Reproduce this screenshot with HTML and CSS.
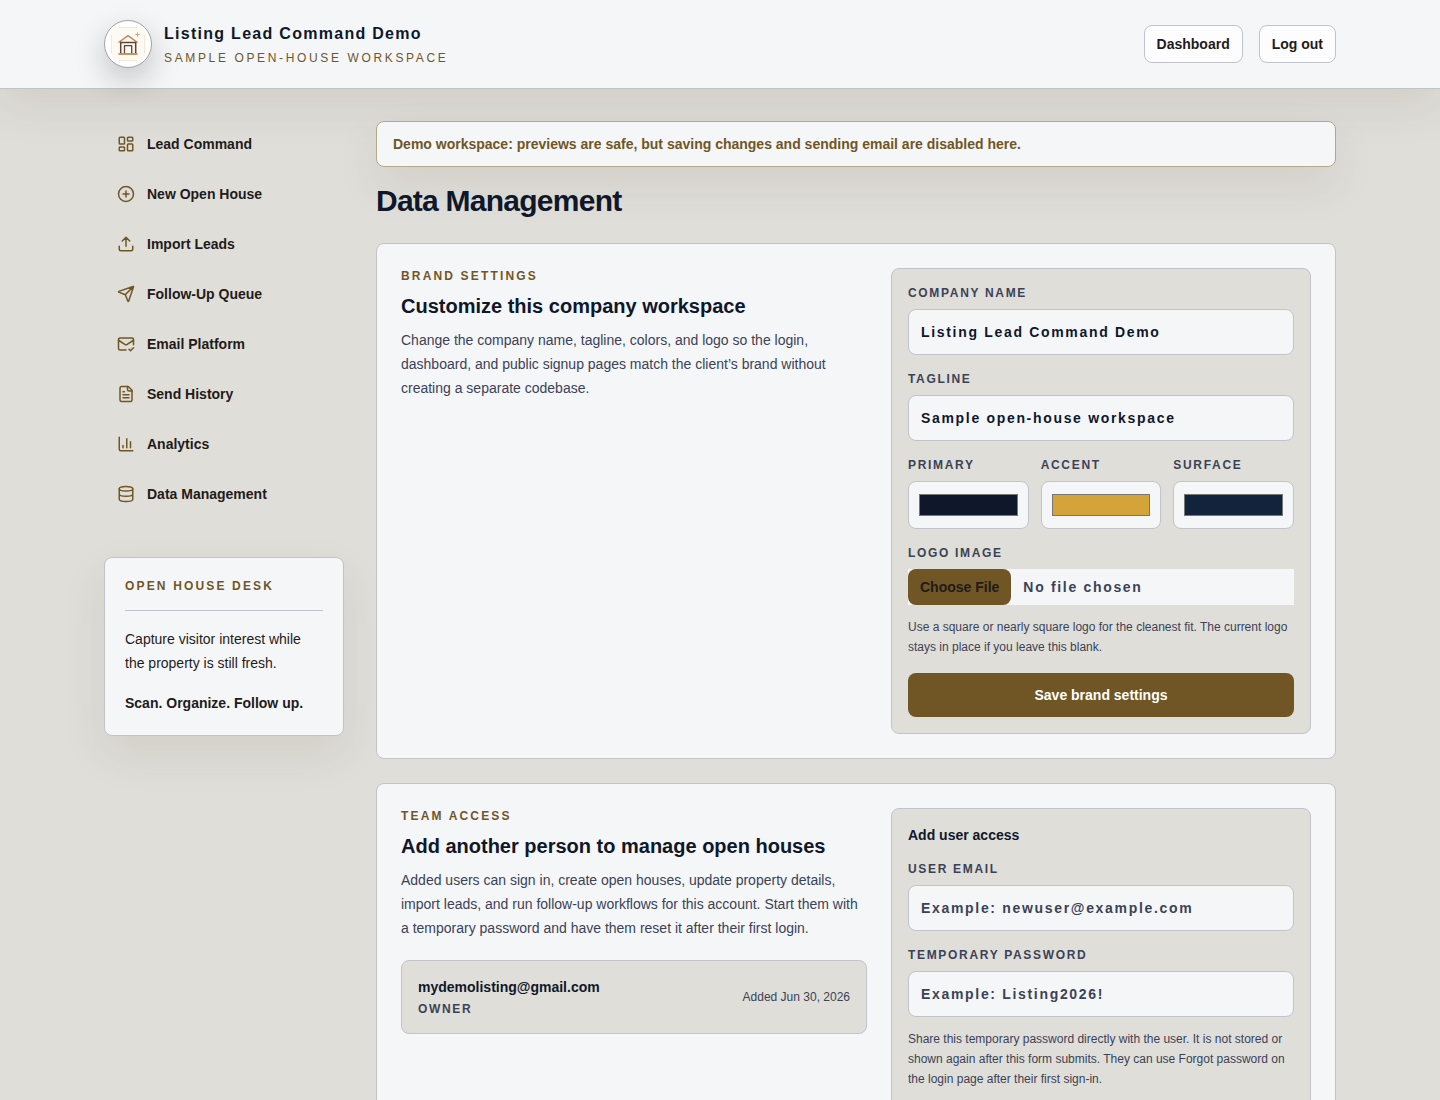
FILE: index.html
```html
<!DOCTYPE html>
<html lang="en">
<head>
<meta charset="utf-8">
<title>Data Management</title>
<link rel="stylesheet" href="styles.css">
</head>
<body>
<header class="topbar">
  <div class="topbar-inner">
    <div class="brand">
      <span class="brand-logo">
        <svg viewBox="0 0 48 48" width="48" height="48" fill="none">
          <rect x="7.500" y="7.500" width="33" height="33" rx="5" fill="#fff9f3"/>
          <path d="M15 7.500h18M15 40.500h18M7.500 14v20M40.500 14v20" stroke="#f6e7d6"/>
          <path d="M14.500 22.500 24 15.700l9.500 6.800" stroke="#b98a4b" stroke-width="1.500"/>
          <path d="M16.700 22v11.500M31.700 22v11.500M16 22.500h16.500" stroke="#5d4638" stroke-width="1.500"/>
          <path d="M20.500 33.500v-7.800h7.200v7.800" stroke="#5d4638" stroke-width="1.300"/>
          <path d="M14.500 34h19" stroke="#b98a4b" stroke-width="1.700"/>
          <path d="M33.500 12.300v4.400M31.300 14.500h4.400" stroke="#c2a68c"/>
        </svg>
      </span>
      <div>
        <div class="brand-name">Listing Lead Command Demo</div>
        <div class="brand-tagline">Sample open-house workspace</div>
      </div>
    </div>
    <div class="topbar-actions">
      <a class="action">Dashboard</a>
      <a class="action">Log out</a>
    </div>
  </div>
</header>

<div class="layout">
  <aside>
    <nav class="nav">
      <a class="nav-item"><svg class="icon" viewBox="0 0 24 24"><rect width="7" height="9" x="3" y="3" rx="1"/><rect width="7" height="5" x="14" y="3" rx="1"/><rect width="7" height="9" x="14" y="12" rx="1"/><rect width="7" height="5" x="3" y="16" rx="1"/></svg>Lead Command</a>
      <a class="nav-item"><svg class="icon" viewBox="0 0 24 24"><circle cx="12" cy="12" r="10"/><path d="M8 12h8M12 8v8"/></svg>New Open House</a>
      <a class="nav-item"><svg class="icon" viewBox="0 0 24 24"><path d="M12 3v12M17 8l-5-5-5 5M21 15v4a2 2 0 0 1-2 2H5a2 2 0 0 1-2-2v-4"/></svg>Import Leads</a>
      <a class="nav-item"><svg class="icon" viewBox="0 0 24 24"><path d="M14.536 21.686a.5.5 0 0 0 .937-.024l6.500-19a.496.496 0 0 0-.635-.635l-19 6.500a.5.5 0 0 0-.024.937l7.930 3.180a2 2 0 0 1 1.112 1.110zM21.854 2.147l-10.940 10.939"/></svg>Follow-Up Queue</a>
      <a class="nav-item"><svg class="icon" viewBox="0 0 24 24"><path d="M22 13V6a2 2 0 0 0-2-2H4a2 2 0 0 0-2 2v12c0 1.100.9 2 2 2h8"/><path d="m22 7-8.970 5.700a1.940 1.940 0 0 1-2.060 0L2 7M16 19l2 2 4-4"/></svg>Email Platform</a>
      <a class="nav-item"><svg class="icon" viewBox="0 0 24 24"><path d="M15 2H6a2 2 0 0 0-2 2v16a2 2 0 0 0 2 2h12a2 2 0 0 0 2-2V7Z"/><path d="M14 2v4a2 2 0 0 0 2 2h4M10 9H8M16 13H8M16 17H8"/></svg>Send History</a>
      <a class="nav-item"><svg class="icon" viewBox="0 0 24 24"><path d="M3 3v16a2 2 0 0 0 2 2h16M18 17V9M13 17V5M8 17v-3"/></svg>Analytics</a>
      <a class="nav-item"><svg class="icon" viewBox="0 0 24 24"><ellipse cx="12" cy="5" rx="9" ry="3"/><path d="M3 5v14a9 3 0 0 0 18 0V5M3 12a9 3 0 0 0 18 0"/></svg>Data Management</a>
    </nav>
    <div class="desk">
      <div class="eyebrow desk-title">Open House Desk</div>
      <p class="desk-text">Capture visitor interest while the property is still fresh.</p>
      <p class="desk-motto">Scan. Organize. Follow up.</p>
    </div>
  </aside>

  <main>
    <div class="notice">Demo workspace: previews are safe, but saving changes and sending email are disabled here.</div>
    <h1>Data Management</h1>

    <section class="card">
      <div>
        <div class="eyebrow">Brand settings</div>
        <h2>Customize this company workspace</h2>
        <p class="lead">Change the company name, tagline, colors, and logo so the login, dashboard, and public signup pages match the client’s brand without creating a separate codebase.</p>
      </div>
      <form class="panel">
        <label class="field">Company name<input class="input" type="text" value="Listing Lead Command Demo"></label>
        <label class="field">Tagline<input class="input" type="text" value="Sample open-house workspace"></label>
        <div class="colors">
          <label class="field">Primary<input class="input color" type="color" value="#0f172a"></label>
          <label class="field">Accent<input class="input color" type="color" value="#d4a43a"></label>
          <label class="field">Surface<input class="input color" type="color" value="#12243b"></label>
        </div>
        <div>
          <label class="field">Logo image<input class="file" type="file"></label>
          <p class="hint">Use a square or nearly square logo for the cleanest fit. The current logo stays in place if you leave this blank.</p>
        </div>
        <button class="submit" type="button">Save brand settings</button>
      </form>
    </section>

    <section class="card">
      <div>
        <div class="eyebrow">Team access</div>
        <h2>Add another person to manage open houses</h2>
        <p class="lead">Added users can sign in, create open houses, update property details, import leads, and run follow-up workflows for this account. Start them with a temporary password and have them reset it after their first login.</p>
        <div class="member">
          <div>
            <div class="member-email">mydemolisting@gmail.com</div>
            <div class="member-role">Owner</div>
          </div>
          <div class="member-date">Added Jun 30, 2026</div>
        </div>
      </div>
      <form class="panel panel-access">
        <div class="panel-title">Add user access</div>
        <label class="field">User email<input class="input" type="text" placeholder="Example: newuser@example.com"></label>
        <div>
          <label class="field">Temporary password<input class="input" type="text" placeholder="Example: Listing2026!"></label>
          <p class="hint">Share this temporary password directly with the user. It is not stored or shown again after this form submits. They can use Forgot password on the login page after their first sign-in.</p>
        </div>
      </form>
    </section>
  </main>
</div>
</body>
</html>
```
FILE: styles.css
```css
:root {
  --page: #dfded9;
  --surface: #f5f6f8;
  --line: #c0c3c9;
  --brown: #705625;
  --navy: #0f172a;
  --ink: #1f1b1a;
  --muted: #3b4256;
  --shadow: 0 18px 45px rgba(86, 52, 30, 0.09);
}

* { box-sizing: border-box; margin: 0; padding: 0; }

html { overflow: hidden; }

body {
  height: 1100px;
  overflow: hidden;
  background: var(--page);
  color: var(--ink);
  font: 14px/20px "Liberation Sans", Arial, sans-serif;
}

.topbar {
  background: var(--surface);
  border-bottom: 1px solid var(--line);
  box-shadow: var(--shadow);
}
.topbar-inner {
  display: flex;
  align-items: center;
  justify-content: space-between;
  max-width: 1280px;
  margin: 0 auto;
  padding: 20px 24px;
}
.brand { display: flex; align-items: center; gap: 12px; }
.brand-logo {
  display: flex;
  align-items: center;
  justify-content: center;
  width: 48px;
  height: 48px;
  border: 1px solid #a3a3a3;
  border-radius: 50%;
  background: #fff;
  box-shadow: 0 12px 30px rgba(20, 20, 20, 0.22);
}
.brand-logo svg { flex: none; }
.brand-name {
  color: var(--navy);
  font-size: 16px;
  font-weight: 700;
  line-height: 24px;
  letter-spacing: 0.08em;
}
.brand-tagline {
  margin-top: 4px;
  color: var(--brown);
  font-size: 12px;
  line-height: 16px;
  letter-spacing: 0.22em;
  text-transform: uppercase;
}
.topbar-actions { display: flex; gap: 16px; }
.action {
  padding: 8px 12px;
  border: 1px solid var(--line);
  border-radius: 8px;
  background: #fdfdfe;
  font-weight: 700;
}

.layout {
  display: grid;
  grid-template-columns: 240px minmax(0, 1fr);
  gap: 32px;
  max-width: 1280px;
  margin: 0 auto;
  padding: 32px 24px 0;
}

.nav { display: grid; gap: 4px; }
.nav-item {
  display: flex;
  align-items: center;
  gap: 12px;
  padding: 12px;
  border: 1px solid transparent;
  font-weight: 700;
}
.icon {
  width: 18px;
  height: 18px;
  fill: none;
  stroke: var(--brown);
  stroke-width: 2;
  stroke-linecap: round;
  stroke-linejoin: round;
}

.eyebrow {
  color: var(--brown);
  font-size: 12px;
  font-weight: 700;
  line-height: 16px;
  letter-spacing: 0.18em;
  text-transform: uppercase;
}

.desk {
  margin-top: 40px;
  padding: 20px;
  border: 1px solid var(--line);
  border-radius: 8px;
  background: var(--surface);
  box-shadow: var(--shadow);
  line-height: 24px;
}
.desk-title { padding-bottom: 16px; border-bottom: 1px solid var(--line); }
.desk-text { margin-top: 16px; }
.desk-motto { margin-top: 16px; font-weight: 700; }

.notice {
  padding: 12px 16px;
  border: 1px solid #b5a88c;
  border-radius: 8px;
  background: var(--surface);
  box-shadow: var(--shadow);
  color: var(--brown);
  font-weight: 700;
}
h1 {
  margin-top: 16px;
  color: var(--navy);
  font-size: 30px;
  line-height: 36px;
  letter-spacing: -0.025em;
}

.card {
  display: grid;
  grid-template-columns: minmax(0, 1fr) 420px;
  gap: 24px;
  margin-top: 24px;
  padding: 24px;
  border: 1px solid var(--line);
  border-radius: 8px;
  background: var(--surface);
}
h2 {
  margin-top: 8px;
  color: var(--navy);
  font-size: 20px;
  line-height: 28px;
}
.lead { margin-top: 8px; color: var(--muted); line-height: 24px; }

.panel {
  display: grid;
  align-content: start;
  gap: 16px;
  padding: 16px;
  border: 1px solid var(--line);
  border-radius: 8px;
  background: var(--page);
}
.panel-access { min-height: 350px; }
.panel-title { color: var(--navy); font-weight: 700; }
.field {
  display: grid;
  gap: 8px;
  color: var(--muted);
  font-size: 12px;
  font-weight: 700;
  line-height: 16px;
  letter-spacing: 0.14em;
  text-transform: uppercase;
}
.input {
  width: 100%;
  height: 46px;
  padding: 12px;
  border: 1px solid var(--line);
  border-radius: 8px;
  background: var(--surface);
  color: var(--navy);
  font: 700 14px/20px "Liberation Sans", Arial, sans-serif;
  letter-spacing: 1.68px;
}
.input::placeholder { color: var(--muted); opacity: 1; }
.colors { display: grid; grid-template-columns: repeat(3, 1fr); gap: 12px; }
.color { height: 48px; padding: 8px; }
.file {
  width: 100%;
  background: var(--surface);
  color: var(--muted);
  font: 700 14px/20px "Liberation Sans", Arial, sans-serif;
  letter-spacing: 1.68px;
}
.file::file-selector-button {
  margin: 0 12px 0 0;
  padding: 8px 12px;
  border: 0;
  border-radius: 8px;
  background: var(--brown);
  color: #1f1b1a;
  font: 700 14px/20px "Liberation Sans", Arial, sans-serif;
  letter-spacing: normal;
}
.hint { margin-top: 12px; color: var(--muted); font-size: 12px; line-height: 20px; }
.submit {
  padding: 12px 16px;
  border: 0;
  border-radius: 8px;
  background: var(--brown);
  color: #fff;
  font: 700 14px/20px "Liberation Sans", Arial, sans-serif;
}

.member {
  display: flex;
  align-items: center;
  justify-content: space-between;
  margin-top: 20px;
  padding: 16px;
  border: 1px solid var(--line);
  border-radius: 8px;
  background: var(--page);
}
.member-email { color: var(--navy); font-weight: 700; }
.member-role {
  margin-top: 4px;
  color: var(--muted);
  font-size: 12px;
  font-weight: 700;
  line-height: 16px;
  letter-spacing: 0.14em;
  text-transform: uppercase;
}
.member-date { color: var(--muted); font-size: 12px; line-height: 16px; }
```
